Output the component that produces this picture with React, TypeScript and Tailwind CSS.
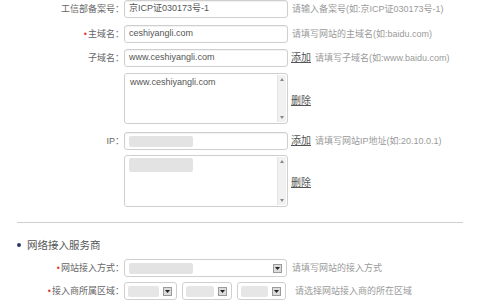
import React from "react";

const font = { fontFamily: '"Liberation Sans", "Noto Sans CJK SC", sans-serif' };

function Label({ text, req }: { text: string; req?: boolean }) {
  return (
    <div className="w-[124px] shrink-0 text-right text-[9px] leading-none text-[#666]">
      {req && <span className="text-[#e0413a] mr-[1px]">•</span>}
      {text}
    </div>
  );
}

function Help({ children, ml = "ml-[4px]" }: { children: React.ReactNode; ml?: string }) {
  return <div className={`${ml} text-[9px] leading-none text-[#9a9a9a] whitespace-nowrap`}>{children}</div>;
}

function Link({ text }: { text: string }) {
  return <span className="text-[10px] leading-none text-[#555] underline mr-[4px]">{text}</span>;
}

function Arrow() {
  return (
    <div className="w-[9px] h-[9px] border border-[#9a9a9a] bg-[#dcdcdc] flex items-center justify-center shrink-0">
      <svg width="5" height="3" viewBox="0 0 5 3">
        <path d="M0 0 L5 0 L2.5 3 Z" fill="#222" />
      </svg>
    </div>
  );
}

function Scrollbar() {
  return (
    <div className="absolute right-[1px] top-[1px] bottom-[1px] w-[9px] bg-[#f1f1f1] border-l border-[#e4e4e4] flex flex-col justify-between items-center py-[3px]">
      <svg width="4" height="3" viewBox="0 0 4 3"><path d="M0 3 L4 3 L2 0 Z" fill="#888" /></svg>
      <svg width="4" height="3" viewBox="0 0 4 3"><path d="M0 0 L4 0 L2 3 Z" fill="#888" /></svg>
    </div>
  );
}

export default function App() {
  const inputCls =
    "w-[164px] h-[18px] shrink-0 border border-[#cfcfcf] rounded-[3px] bg-white shadow-[inset_0_1px_1px_rgba(0,0,0,0.06)] flex items-center px-[4px] text-[9px] text-[#555]";
  return (
    <div className="w-[480px] h-[300px] overflow-hidden bg-white" style={font}>
      <div className="flex flex-col">
        <div className="flex items-center h-[18px]">
          <Label text="工信部备案号：" />
          <div className={inputCls}>京ICP证030173号-1</div>
          <Help>请输入备案号(如:京ICP证030173号-1)</Help>
        </div>
        <div className="flex items-center h-[18px] mt-[7px]">
          <Label text="主域名：" req />
          <div className={inputCls}>ceshiyangli.com</div>
          <Help>请填写网站的主域名(如:baidu.com)</Help>
        </div>
        <div className="flex items-center h-[18px] mt-[6px]">
          <Label text="子域名：" />
          <div className={inputCls}>www.ceshiyangli.com</div>
          <div className="ml-[3px] flex items-center">
            <Link text="添加" />
            <Help ml="ml-0">请填写子域名(如:www.baidu.com)</Help>
          </div>
        </div>
        <div className="flex items-center h-[51px] mt-[6px]">
          <div className="w-[124px] shrink-0" />
          <div className="relative w-[164px] h-[51px] shrink-0 border border-[#cfcfcf] rounded-[3px] bg-white px-[5px] pt-[3px] text-[9px] leading-[11px] text-[#555]">
            www.ceshiyangli.com
            <Scrollbar />
          </div>
          <div className="ml-[3px]"><Link text="删除" /></div>
        </div>
        <div className="flex items-center h-[18px] mt-[8px]">
          <Label text="IP：" />
          <div className={inputCls}>
            <div className="w-[64px] h-[11px] bg-[#e3e3e3] rounded-[2px]" />
          </div>
          <div className="ml-[3px] flex items-center">
            <Link text="添加" />
            <Help ml="ml-0">请填写网站IP地址(如:20.10.0.1)</Help>
          </div>
        </div>
        <div className="flex items-center h-[52px] mt-[5px]">
          <div className="w-[124px] shrink-0" />
          <div className="relative w-[164px] h-[52px] shrink-0 border border-[#cfcfcf] rounded-[3px] bg-white px-[4px] pt-[2px]">
            <div className="w-[64px] h-[14px] bg-[#e3e3e3] rounded-[2px]" />
            <Scrollbar />
          </div>
          <div className="ml-[3px]"><Link text="删除" /></div>
        </div>
        <div className="ml-[17px] w-[446px] h-[1px] bg-[#cfcfcf] mt-[15px]" />
        <div className="flex items-center h-[12px] mt-[16px] ml-[17px]">
          <div className="w-[4px] h-[4px] rounded-full bg-[#2f3a6b]" />
          <div className="ml-[6px] text-[10.5px] leading-none text-[#555]">网络接入服务商</div>
        </div>
        <div className="flex items-center h-[18px] mt-[8px]">
          <Label text="网站接入方式：" req />
          <div className="w-[163px] h-[18px] shrink-0 border border-[#cfcfcf] rounded-[3px] bg-white flex items-center justify-between pl-[4px] pr-[4px]">
            <div className="w-[64px] h-[11px] bg-[#e3e3e3] rounded-[2px]" />
            <Arrow />
          </div>
          <Help ml="ml-[5px]">请填写网站的接入方式</Help>
        </div>
        <div className="flex items-center h-[18px] mt-[5px]">
          <Label text="接入商所属区域：" req />
          <div className="flex gap-[5px] shrink-0">
            {[53, 50, 49].map((w, i) => (
              <div
                key={i}
                className="h-[18px] border border-[#cfcfcf] rounded-[3px] bg-white flex items-center justify-between pl-[3px] pr-[4px]"
                style={{ width: w }}
              >
                <div className="h-[11px] bg-[#e6e6e6] rounded-[2px]" style={{ width: w - 22 }} />
                <Arrow />
              </div>
            ))}
          </div>
          <Help ml="ml-[9px]">请选择网站接入商的所在区域</Help>
        </div>
      </div>
    </div>
  );
}
